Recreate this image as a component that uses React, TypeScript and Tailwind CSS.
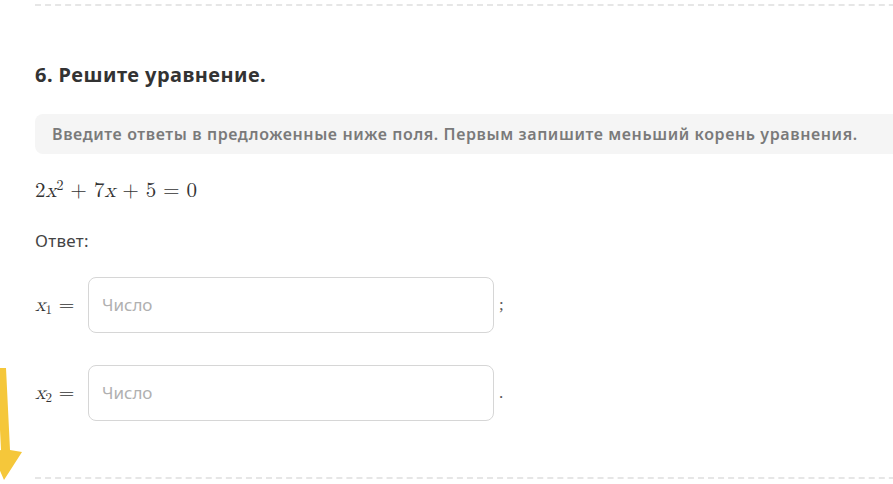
import React from "react";

const serif = { fontFamily: '"Latin Modern Math", "DejaVu Serif", "Liberation Serif", serif' };

function Input({ end }: { end: string }) {
  return (
    <div className="flex items-center">
      <div className="w-[406px] h-[56px] rounded-[8px] border border-[#d6d6d6] flex items-center pl-[13px] text-[17px] text-[#b0b0b0]">
        Число
      </div>
      <span className="ml-[5px] text-[17px] text-[#555] font-['Liberation_Serif',serif]">{end}</span>
    </div>
  );
}

export default function App() {
  return (
    <div className="relative w-[893px] h-[484px] bg-white overflow-hidden font-['Noto_Sans',sans-serif]">
      <div className="pl-[35px] pt-[4px]">
        <div className="border-t-2 border-dashed border-[#e6e6e6] w-[900px]" />
        <h2 className="mt-[56px] text-[20px] font-bold text-[#333] leading-[26px] tracking-[0.45px]">6. Решите уравнение.</h2>
        <div className="mt-[26px] w-[900px] h-[40px] bg-[#f5f5f5] rounded-[8px] flex items-center pl-[17px] text-[16px] font-semibold text-[#7a7a7a] tracking-[0.6px] whitespace-nowrap">
          Введите ответы в предложенные ниже поля. Первым запишите меньший корень уравнения.
        </div>
        <div className="mt-[23px] text-[21px] text-[#333] leading-[28px]" style={serif}>
          2<i>x</i><sup className="text-[14px]">2</sup> + 7<i>x</i> + 5 = 0
        </div>
        <div className="mt-[25px] text-[17px] text-[#444] leading-[22px] tracking-[0.3px]">Ответ:</div>
        <div className="mt-[25px] flex items-center gap-[9px]">
          <span className="text-[20px] text-[#333] w-[44px]" style={serif}>
            <i>x</i><sub className="text-[13px]">1</sub> =
          </span>
          <Input end=";" />
        </div>
        <div className="mt-[32px] flex items-center gap-[9px]">
          <span className="text-[20px] text-[#333] w-[44px]" style={serif}>
            <i>x</i><sub className="text-[13px]">2</sub> =
          </span>
          <Input end="." />
        </div>
        <div className="mt-[56px] border-t-2 border-dashed border-[#e6e6e6] w-[900px]" />
      </div>
      <svg className="absolute left-0 top-[360px]" width="30" height="124" viewBox="0 0 30 124">
        <path d="M-3 8 L6 8 L10 90 L22 92 L4 120 L-8 92 L1 90 Z" fill="#f5c73a" />
      </svg>
    </div>
  );
}
